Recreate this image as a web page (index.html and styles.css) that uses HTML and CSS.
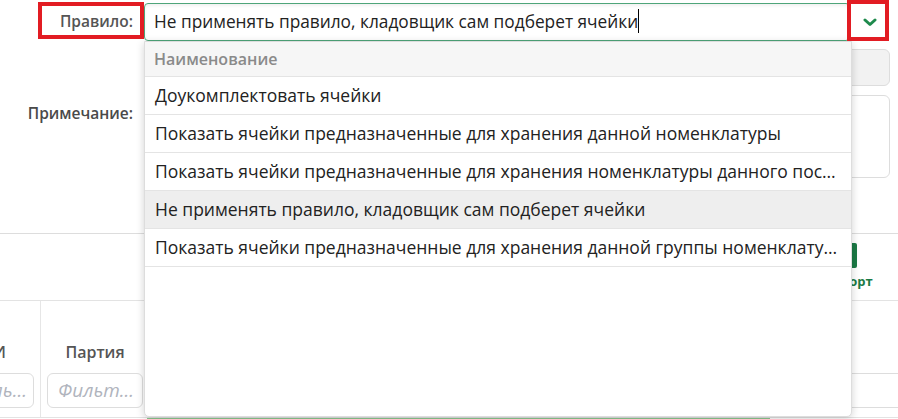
FILE: index.html
```html
<!DOCTYPE html>
<html>
<head>
<meta charset="utf-8">
<title>Правило</title>
<link rel="stylesheet" href="styles.css">
</head>
<body>

<div class="form">
  <div class="row row-rule">
    <div class="label">Правило:</div>
    <div class="field combo">
      <div class="combo-input">Не применять правило, кладовщик сам подберет ячейки<span class="caret"></span></div>
      <div class="combo-btn">
        <svg width="14" height="9" viewBox="0 0 14 9"><path d="M2,2l5,4.5l5,-4.5" stroke="#1e8a4c" stroke-width="3" fill="none" stroke-linecap="round" stroke-linejoin="round"/></svg>
      </div>
    </div>
  </div>

  <div class="row row-small">
    <div class="label"></div>
    <div class="field plain"></div>
  </div>

  <div class="row row-note">
    <div class="label">Примечание:</div>
    <div class="field area"></div>
  </div>
</div>

<div class="toolbar">
  <div class="tool">
    <div class="tool-icon"></div>
    <div class="tool-label">Экспорт</div>
  </div>
</div>

<div class="table-wrap">
  <div class="table">
    <div class="cell head">ЕИ</div>
    <div class="cell head">Партия</div>
    <div class="cell head"></div>
    <div class="cell head"></div>
    <div class="cell head"></div>

    <div class="cell filter"><div class="filter-input">Филь...</div></div>
    <div class="cell filter"><div class="filter-input">Фильт...</div></div>
    <div class="cell filter"></div>
    <div class="cell filter"><div class="filter-input"></div></div>
    <div class="cell filter"><div class="filter-input"></div></div>
  </div>
  <div class="green-line"></div>
</div>

<div class="dropdown">
  <div class="dd-head">Наименование</div>
  <div class="dd-item">Доукомплектовать ячейки</div>
  <div class="dd-item">Показать ячейки предназначенные для хранения данной номенклатуры</div>
  <div class="dd-item">Показать ячейки предназначенные для хранения номенклатуры данного поставщика</div>
  <div class="dd-item active">Не применять правило, кладовщик сам подберет ячейки</div>
  <div class="dd-item">Показать ячейки предназначенные для хранения данной группы номенклатуры</div>
</div>

<div class="mark mark-label"></div>
<div class="mark mark-btn"></div>

</body>
</html>
```

FILE: styles.css
```css
body {
  margin: 0;
  font-family: "Open Sans", "Noto Sans", sans-serif;
  color: #222;
  background: #fff;
  overflow: hidden;
}

.form {
  padding-top: 3px;
}

.row {
  display: flex;
}

.label {
  width: 133px;
  padding-right: 11px;
  text-align: right;
  font-size: 15.5px;
  font-weight: 600;
  color: #4a4a4a;
  flex-shrink: 0;
}

.field {
  width: 746px;
  box-sizing: border-box;
}

.row-rule {
  height: 38px;
}

.row-rule .label {
  line-height: 36px;
  color: #555;
}

.combo {
  display: flex;
}

.combo-input {
  width: 706px;
  height: 38px;
  box-sizing: border-box;
  border: 1px solid #4ea57a;
  border-radius: 4px;
  padding: 0 9px;
  font-size: 17.3px;
  line-height: 35px;
  white-space: nowrap;
  box-shadow: inset 0 2px 3px rgba(0, 0, 0, 0.06);
}

.caret {
  display: inline-block;
  width: 1px;
  height: 24px;
  background: #000;
  vertical-align: -5px;
}

.combo-btn {
  width: 40px;
  display: flex;
  align-items: center;
  justify-content: center;
}

.row-small {
  margin-top: 8px;
}

.plain {
  height: 37px;
  background: #f2f2f2;
  border: 1px solid #ddd;
  border-radius: 6px;
}

.row-note {
  margin-top: 9px;
}

.row-note .label {
  padding-top: 7px;
}

.area {
  height: 83px;
  border: 1px solid #ddd;
  border-radius: 6px;
}

.toolbar {
  margin-top: 55px;
  border-top: 1px solid #ddd;
  height: 66px;
  display: flex;
  justify-content: flex-end;
  padding-right: 22px;
}

.tool {
  width: 62px;
  display: flex;
  flex-direction: column;
  align-items: center;
}

.tool-icon {
  margin-top: 9px;
  width: 24px;
  height: 25px;
  background: #1b7a45;
  border-radius: 2px;
}

.tool-label {
  margin-top: 4px;
  font-size: 13px;
  font-weight: 700;
  color: #1b7a45;
}

.table-wrap {
  overflow: hidden;
  border-top: 1px solid #e3e3e3;
  position: relative;
  height: 119px;
}

.table {
  margin-left: -50px;
  width: 1000px;
  display: grid;
  grid-template-columns: 90px 109px 1fr 139px 124px;
  border-bottom: 1px solid #e3e3e3;
}

.cell {
  border-left: 1px solid #e6e6e6;
}

.cell:nth-child(5n+1) {
  border-left: none;
}

.head {
  height: 67px;
  box-sizing: border-box;
  padding-top: 40px;
  text-align: center;
  font-size: 16px;
  font-weight: 600;
  color: #555;
}

.filter {
  height: 44px;
  padding: 5px 6px 0 6px;
}

.filter-input {
  height: 35px;
  box-sizing: border-box;
  border: 1px solid #ddd;
  border-radius: 6px;
  padding-left: 10px;
  font-size: 19px;
  font-style: italic;
  line-height: 33px;
  color: #b0b4bd;
  white-space: nowrap;
  overflow: hidden;
}

.filter:nth-child(6) .filter-input {
  text-align: right;
  padding-right: 6px;
}

.green-line {
  position: absolute;
  left: 147px;
  bottom: 0;
  width: 623px;
  height: 2px;
  background: #8cc98f;
}

.dropdown {
  position: absolute;
  left: 144px;
  top: 41px;
  width: 708px;
  height: 376px;
  box-sizing: border-box;
  background: #fff;
  border: 1px solid #ddd;
  border-radius: 0 0 5px 5px;
  box-shadow: 0 2px 8px rgba(0, 0, 0, 0.18);
}

.dd-head {
  height: 35px;
  box-sizing: border-box;
  padding-left: 9px;
  line-height: 34px;
  font-size: 16px;
  font-weight: 600;
  color: #8a8a8a;
  background: #f6f6f6;
  border-bottom: 1px solid #e4e4e4;
}

.dd-item {
  height: 38px;
  box-sizing: border-box;
  padding: 0 8px 0 10px;
  line-height: 36px;
  font-size: 17.5px;
  border-bottom: 1px solid #e4e4e4;
  white-space: nowrap;
  overflow: hidden;
  text-overflow: ellipsis;
}

.dd-item.active {
  background: #eeeeee;
}

.mark {
  position: absolute;
  border: 4px solid #e21c23;
  box-sizing: border-box;
}

.mark-label {
  left: 38px;
  top: 2px;
  width: 106px;
  height: 37px;
}

.mark-btn {
  left: 847px;
  top: 0;
  width: 42px;
  height: 41px;
}
```
